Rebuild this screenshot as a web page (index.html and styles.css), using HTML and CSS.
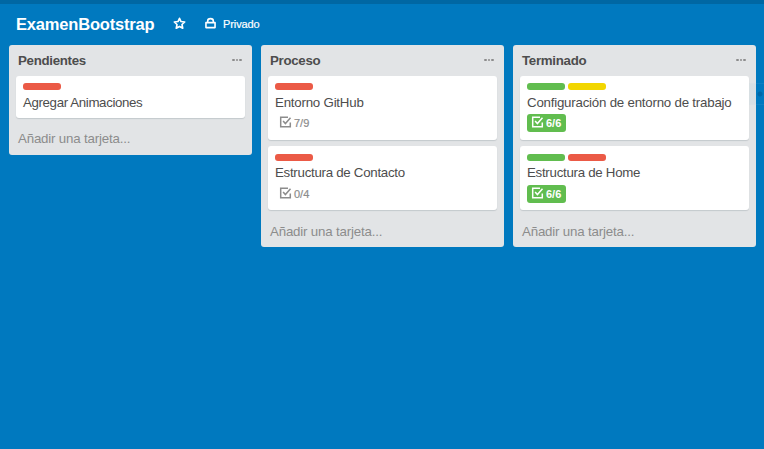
FILE: index.html
```
<!DOCTYPE html>
<html lang="es">
<head>
<meta charset="utf-8">
<title>ExamenBootstrap</title>
<link rel="stylesheet" href="styles.css">
</head>
<body>
<svg class="defs" width="0" height="0">
  <symbol id="check" viewBox="0 0 12 12">
    <path d="M8.5 1.2H1.2v9.6h9.6V6.5M3.6 5l2.3 2.6L11 1.8" fill="none" stroke="currentColor" stroke-width="1.5"/>
  </symbol>
</svg>
<header class="board-header">
  <h1>ExamenBootstrap</h1>
  <svg class="star" viewBox="0 0 12 12"><path d="M6 1.2l1.4 3 3.4.4-2.5 2.3.7 3.5L6 8.7l-3 1.7.7-3.5L1.2 4.6l3.4-.4z" fill="none" stroke="currentColor" stroke-width="1.5" stroke-linejoin="round"/></svg>
  <svg class="lock" viewBox="0 0 12 12"><path d="M1.8 5.2h8.4v4.6H1.8zM3.4 5V3.8a2.6 2.3 0 0 1 5.2 0V5" fill="none" stroke="currentColor" stroke-width="1.5" stroke-linejoin="round"/></svg>
  <span class="privacy">Privado</span>
</header>
<main class="board">
  <section class="list">
    <div class="list-header"><h2>Pendientes</h2><span class="menu"><i></i><i></i><i></i></span></div>
    <article class="card short">
      <div class="labels"><span class="label red"></span></div>
      <p class="tight">Agregar Animaciones</p>
    </article>
    <a class="add">Añadir una tarjeta...</a>
  </section>
  <section class="list">
    <div class="list-header"><h2>Proceso</h2><span class="menu"><i></i><i></i><i></i></span></div>
    <article class="card">
      <div class="labels"><span class="label red"></span></div>
      <p>Entorno GitHub</p>
      <div class="badge"><svg><use href="#check"/></svg><span>7/9</span></div>
    </article>
    <article class="card">
      <div class="labels"><span class="label red"></span></div>
      <p>Estructura de Contacto</p>
      <div class="badge"><svg><use href="#check"/></svg><span>0/4</span></div>
    </article>
    <a class="add">Añadir una tarjeta...</a>
  </section>
  <section class="list">
    <div class="list-header"><h2>Terminado</h2><span class="menu"><i></i><i></i><i></i></span></div>
    <article class="card">
      <div class="labels"><span class="label green"></span><span class="label yellow"></span></div>
      <p>Configuración de entorno de trabajo</p>
      <div class="badge done"><svg><use href="#check"/></svg><span>6/6</span></div>
    </article>
    <article class="card">
      <div class="labels"><span class="label green"></span><span class="label red"></span></div>
      <p>Estructura de Home</p>
      <div class="badge done"><svg><use href="#check"/></svg><span>6/6</span></div>
    </article>
    <a class="add">Añadir una tarjeta...</a>
  </section>
</main>
<div class="edge-tab"></div>
</body>
</html>
```
FILE: styles.css
```
* { box-sizing: border-box; }
body {
  margin: 0;
  height: 449px;
  overflow: hidden;
  background: #0079bf;
  border-top: 4px solid #0067a3;
  font-family: "Liberation Sans", Arial, sans-serif;
  color: #4d4d4d;
}
h1, h2, p { margin: 0; }
.defs { position: absolute; }
.board-header {
  height: 41px;
  padding: 0 0 2px 16px;
  display: flex;
  align-items: center;
  color: #fff;
}
h1 { font-size: 16.5px; letter-spacing: -0.18px; line-height: 20px; width: 157px; white-space: nowrap; padding-top: 1px; }
.star { width: 13px; height: 13px; margin-right: 18px; }
.lock { width: 13px; height: 13px; margin-right: 6px; }
.privacy { font-size: 11px; letter-spacing: -0.1px; line-height: 14px; padding-top: 1px; -webkit-text-stroke: 0.2px #fff; }
.board {
  display: flex;
  align-items: flex-start;
  gap: 9px;
  padding-left: 9px;
}
.list {
  width: 243px;
  flex: none;
  background: #e2e4e6;
  border-radius: 3px;
  padding: 0 7px;
}
.list-header {
  height: 31px;
  padding: 0 3px 0 2px;
  display: flex;
  justify-content: space-between;
  align-items: center;
}
h2 { font-size: 13.3px; letter-spacing: -0.3px; line-height: 16px; }
.menu { display: flex; gap: 1px; margin-top: -1px; }
.menu i { width: 2.6px; height: 2px; border-radius: 1px; background: #8c8c8c; }
.card {
  height: 64px;
  padding: 7px 7px 0;
  background: #fff;
  border-radius: 3px;
  box-shadow: 0 1px 1px #c4c9cc;
}
.short { height: 42px; }
.card + .card { margin-top: 6px; padding-top: 8px; }
.labels { display: flex; gap: 3px; height: 7px; }
.label { width: 38px; border-radius: 3px; }
.red { background: #eb5a46; }
.green { background: #61bd4f; }
.yellow { background: #f2d600; }
.card p { font-size: 13.3px; letter-spacing: -0.22px; line-height: 16px; margin-top: 5px; white-space: nowrap; }
.card .tight { letter-spacing: -0.37px; }
.card + .card p { margin-top: 4px; letter-spacing: -0.28px; }
.badge {
  display: flex;
  align-items: center;
  gap: 3px;
  width: 39px;
  height: 18px;
  margin-top: 3px;
  padding-left: 4px;
  border-radius: 3px;
  font-size: 11px;
  line-height: 18px;
  color: #8c8c8c;
  -webkit-text-stroke: 0.2px currentColor;
}
.card + .card .badge { margin-top: 4px; }
.badge svg { width: 13px; height: 12px; flex: none; margin: -2px -1px 0 0; }
.done { background: #61bd4f; color: #fff; font-weight: bold; -webkit-text-stroke: 0; }
.add {
  display: block;
  height: 37px;
  padding: 14px 2px 0;
  font-size: 13.3px;
  letter-spacing: -0.18px;
  line-height: 16px;
  color: #8c8c8c;
}
.short + .add { padding-top: 13px; }
.edge-tab {
  position: absolute;
  left: 749px;
  top: 83px;
  width: 15px;
  height: 22px;
  border: 1px solid rgba(255, 255, 255, 0.06);
  border-right: 0;
  background: radial-gradient(circle at 10px 10px, rgba(0, 85, 145, 0.5) 0 2px, rgba(0, 121, 191, 0.04) 3px);
}
```
